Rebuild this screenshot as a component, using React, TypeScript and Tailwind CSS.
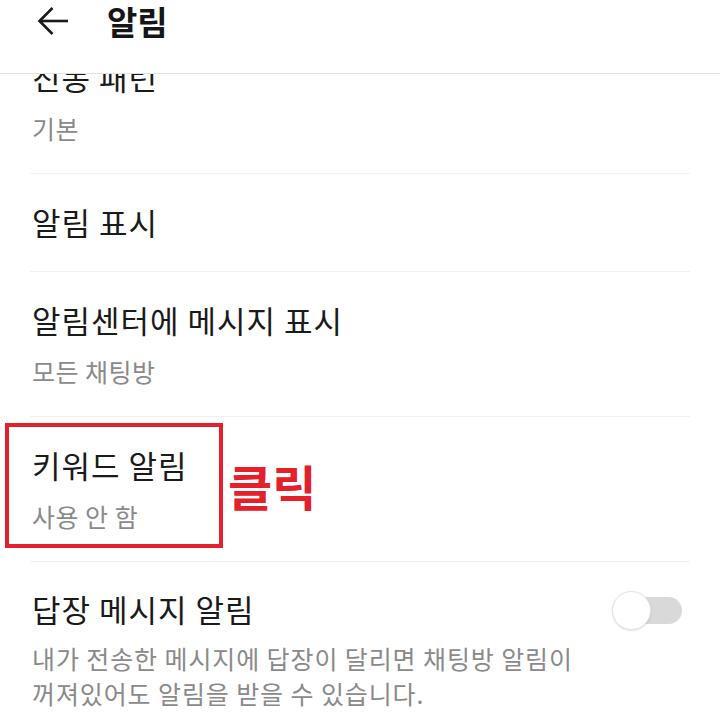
import React from "react";

const font = { fontFamily: '"Noto Sans CJK KR", "Noto Sans", sans-serif' };

function BackArrow() {
  return (
    <svg width="32" height="30" viewBox="0 0 32 30" fill="none" stroke="#1a1a1a" strokeWidth="2.6" strokeLinecap="butt" strokeLinejoin="miter">
      <path d="M31 15H3" />
      <path d="M15.5 2 2.5 15l13 13" />
    </svg>
  );
}

function Toggle() {
  return (
    <div className="relative w-[70px] h-[40px] flex items-center">
      <div className="absolute left-[6px] right-0 h-[27px] rounded-full bg-[#d9d9d9]" />
      <div className="absolute left-0 top-[0.5px] w-[39px] h-[39px] rounded-full bg-white border border-[#e4e4e4] shadow-[0_1px_2px_rgba(0,0,0,0.12)]" />
    </div>
  );
}

function SettingRow({ title, sub }: { title: string; sub?: string }) {
  return (
    <div className="mx-[30px] border-b border-[#f1f1f1] pt-7 pb-[29px] pl-[2px]">
      <div className="text-[31px] leading-[40px] tracking-[1px] text-[#1a1a1a]">{title}</div>
      {sub && <div className="mt-[15px] text-[25px] leading-[32px] tracking-[0.5px] text-[#8a8a8a]">{sub}</div>}
    </div>
  );
}

export default function App() {
  return (
    <div className="relative w-[720px] h-[715px] overflow-hidden bg-white" style={font}>
      <header className="relative z-10 h-[74px] bg-white border-b border-[#e2e2e2] flex items-start">
        <div className="flex items-center h-[42px] pl-[37px]">
          <BackArrow />
          <h1 className="ml-[38px] text-[33px] leading-[42px] font-bold text-[#161616]">알림</h1>
        </div>
      </header>

      <div className="overflow-hidden">
        <div className="-mt-[45px]">
          <SettingRow title="진동 패턴" sub="기본" />
          <SettingRow title="알림 표시" />
          <SettingRow title="알림센터에 메시지 표시" sub="모든 채팅방" />
          <SettingRow title="키워드 알림" sub="사용 안 함" />
          <div className="mx-[30px] pt-[26px] pl-[2px]">
            <div className="flex items-center justify-between">
              <div className="text-[31px] leading-[40px] tracking-[1px] text-[#1a1a1a]">답장 메시지 알림</div>
              <div className="mr-[8px] mt-[2px]">
                <Toggle />
              </div>
            </div>
            <p className="mt-[11px] text-[25px] leading-[35px] tracking-[0.9px] text-[#8a8a8a]">
              내가 전송한 메시지에 답장이 달리면 채팅방 알림이
              <br />
              꺼져있어도 알림을 받을 수 있습니다.
            </p>
          </div>
        </div>
      </div>

      {/* annotation */}
      <div className="absolute left-[5px] top-[423px] w-[218px] h-[125px] border-[4px] border-[#e3202b]" />
      <div className="absolute left-[228px] top-[455px] text-[48px] leading-[60px] font-bold text-[#e3202b]">클릭</div>
    </div>
  );
}
